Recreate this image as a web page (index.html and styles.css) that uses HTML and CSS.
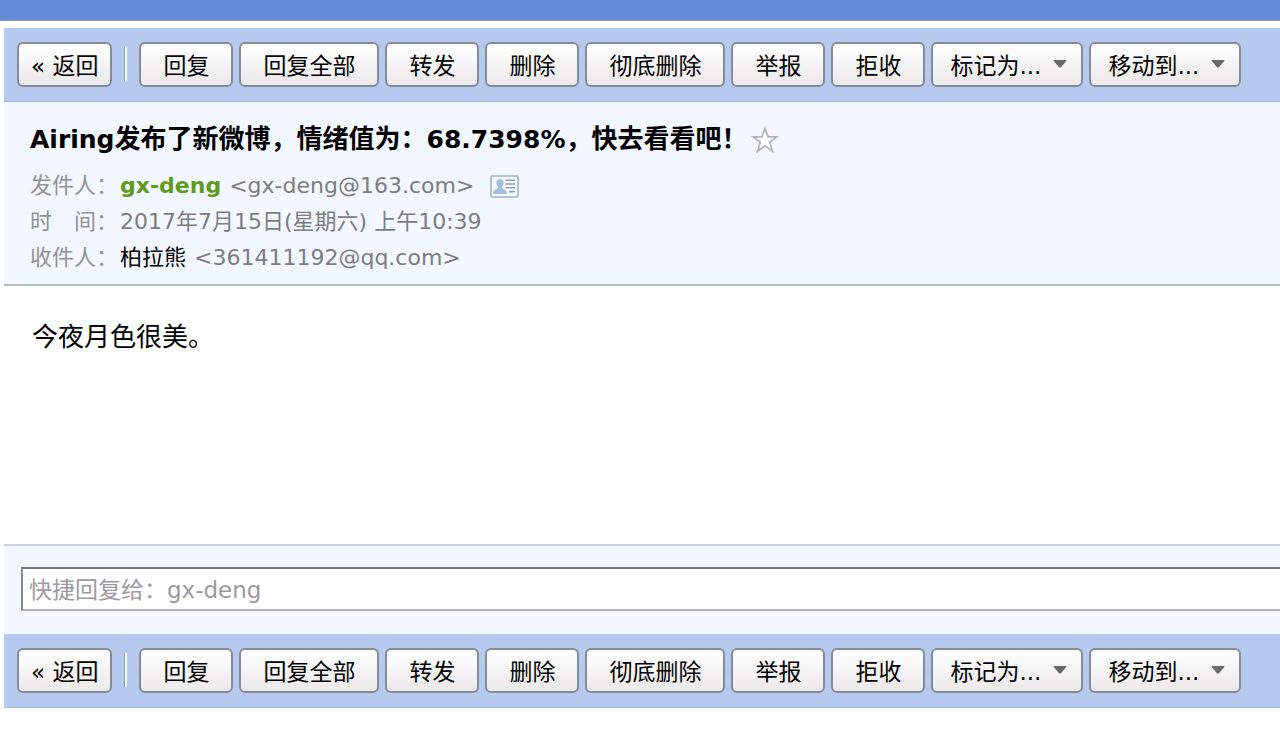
FILE: index.html
```html
<!DOCTYPE html>
<html lang="zh-CN">
<head>
  <meta charset="UTF-8">
  <meta name="viewport" content="width=device-width, initial-scale=1.0">
  <title>读信</title>
  <link rel="stylesheet" href="styles.css">
</head>
<body>
  <header class="topbar"></header>

  <main class="mail">
    <div class="toolbar">
      <button type="button" class="btn btn-back">« 返回</button>
      <span class="separator"></span>
      <div class="btn-group">
        <button type="button" class="btn">回复</button>
        <button type="button" class="btn">回复全部</button>
        <button type="button" class="btn">转发</button>
        <button type="button" class="btn">删除</button>
        <button type="button" class="btn">彻底删除</button>
        <button type="button" class="btn">举报</button>
        <button type="button" class="btn">拒收</button>
        <div class="dropdown">
          <select class="btn" aria-label="标记为">
            <option>标记为...</option>
          </select>
          <svg class="arrow" viewBox="0 0 14 8"><path d="M1.5 0h11q1.6 0 .6 1.2L8.2 7q-1.2 1.4-2.4 0L.9 1.2Q-.1 0 1.5 0z"/></svg>
        </div>
        <div class="dropdown">
          <select class="btn" aria-label="移动到">
            <option>移动到...</option>
          </select>
          <svg class="arrow" viewBox="0 0 14 8"><path d="M1.5 0h11q1.6 0 .6 1.2L8.2 7q-1.2 1.4-2.4 0L.9 1.2Q-.1 0 1.5 0z"/></svg>
        </div>
      </div>
    </div>

    <section class="mail-head">
      <div class="subject-row">
        <h1 class="subject"><span class="latin">Airing</span>发布了新微博，情绪值为：<span class="latin">68.7398%</span>，快去看看吧！</h1>
        <button type="button" class="icon-btn" aria-label="星标">
          <svg class="star" viewBox="0 0 26 26"><path d="M13 2l2.8 8H24l-6.6 5 2.5 8.5L13 18.4l-6.9 5.1L8.6 15 2 10h8.2z"/></svg>
        </button>
      </div>
      <dl class="meta">
        <dt>发件人：</dt>
        <dd>
          <b class="sender">gx-deng</b>
          <span>&lt;gx-deng@163.com&gt;</span>
          <button type="button" class="icon-btn card-btn" aria-label="联系人">
            <svg class="card" viewBox="0 0 29 23">
              <rect x="1" y="1" width="27" height="21" rx="1" fill="#f5f9fe" stroke="#9fb3c9" stroke-width="1.6"/>
              <path d="M10 4c2.300 0 3.800 1.500 3.600 4-.1 1.700-.7 2.900-1.500 3.600v1.700c1.400.9 4.900 1.400 4.900 5.700H3c0-4.300 3.500-4.800 4.900-5.700v-1.700C7.100 10.900 6.500 9.700 6.400 8 6.200 5.500 7.700 4 10 4z" fill="#a5bedb"/>
              <path d="M15.500 5.200H25M15.500 9H25M15.500 12.800H25M19 16.600h6" stroke="#8ea3ba" stroke-width="1.600"/>
            </svg>
          </button>
        </dd>
        <dt>时　间：</dt>
        <dd>2017年7月15日(星期六) 上午10:39</dd>
        <dt>收件人：</dt>
        <dd>
          <span class="receiver">柏拉熊</span>
          <span>&lt;361411192@qq.com&gt;</span>
        </dd>
      </dl>
    </section>

    <article class="mail-body">今夜月色很美。</article>

    <form class="quick-reply">
      <input type="text" class="reply-input" aria-label="快捷回复" placeholder="快捷回复给：gx-deng">
    </form>

    <div class="toolbar">
      <button type="button" class="btn btn-back">« 返回</button>
      <span class="separator"></span>
      <div class="btn-group">
        <button type="button" class="btn">回复</button>
        <button type="button" class="btn">回复全部</button>
        <button type="button" class="btn">转发</button>
        <button type="button" class="btn">删除</button>
        <button type="button" class="btn">彻底删除</button>
        <button type="button" class="btn">举报</button>
        <button type="button" class="btn">拒收</button>
        <div class="dropdown">
          <select class="btn" aria-label="标记为">
            <option>标记为...</option>
          </select>
          <svg class="arrow" viewBox="0 0 14 8"><path d="M1.5 0h11q1.6 0 .6 1.2L8.2 7q-1.2 1.4-2.4 0L.9 1.2Q-.1 0 1.5 0z"/></svg>
        </div>
        <div class="dropdown">
          <select class="btn" aria-label="移动到">
            <option>移动到...</option>
          </select>
          <svg class="arrow" viewBox="0 0 14 8"><path d="M1.5 0h11q1.6 0 .6 1.2L8.2 7q-1.2 1.4-2.4 0L.9 1.2Q-.1 0 1.5 0z"/></svg>
        </div>
      </div>
    </div>
  </main>
</body>
</html>
```
FILE: styles.css
```css
* {
  box-sizing: border-box;
}
body {
  margin: 0;
  background-color: #fff;
  color: #000;
  font-family: "DejaVu Sans", "Noto Sans CJK SC", sans-serif;
  font-size: 22px;
}
.topbar {
  height: 21px;
  background-color: #6389d7;
  border-bottom: 1px solid #7f99cf;
}
.mail {
  margin: 7px 0 0 4px;
}

/* toolbar */
.toolbar {
  display: flex;
  align-items: center;
  gap: 12px;
  height: 74px;
  padding: 0 13px 1px;
  background-color: #b6c9ef;
  border-bottom: 1px solid #a3b7dc;
}
.btn-group {
  display: flex;
  gap: 6px;
}
.btn {
  height: 45px;
  padding: 3px 22px 0;
  border: 2px solid #868b98;
  border-radius: 6px;
  background: linear-gradient(#fff, #ebe9ea);
  color: #000;
  font-family: inherit;
  font-size: 23px;
  line-height: 30px;
  white-space: nowrap;
  cursor: pointer;
}
.btn-back {
  padding: 3px 12px 0;
}
.separator {
  width: 3px;
  height: 34px;
  border-left: 1px solid #8f96a5;
  background-color: #fff;
}
.dropdown {
  position: relative;
}
.dropdown .btn {
  appearance: none;
  width: 152px;
  padding: 3px 0 0 17px;
}
.arrow {
  position: absolute;
  top: 18px;
  right: 16px;
  width: 14px;
  height: 8px;
  fill: #6a6a6c;
  pointer-events: none;
}

/* mail header */
.mail-head {
  padding: 17px 26px 8px;
  background-color: #f3f7ff;
  border-bottom: 2px solid #b1c0d5;
}
.subject-row {
  display: flex;
  align-items: center;
  gap: 4px;
}
.subject {
  margin: 0;
  font-size: 26px;
  line-height: 40px;
}
.latin {
  font-size: 25px;
}
.icon-btn {
  display: flex;
  padding: 0;
  border: none;
  background: none;
  cursor: pointer;
}
.star {
  width: 28px;
  height: 28px;
  fill: #fff;
  stroke: #b1b3b7;
  stroke-width: 1.6;
}
.meta {
  display: grid;
  grid-template-columns: 90px 1fr;
  grid-auto-rows: 36px;
  margin: 8px 0 0;
  line-height: 36px;
  color: #7d7d7f;
}
.meta dt {
  color: #929295;
}
.meta dd {
  display: flex;
  align-items: center;
  gap: 8px;
  margin: 0;
}
.sender {
  color: #5e9c1e;
}
.receiver {
  color: #000;
}
.card-btn {
  margin-left: 8px;
}
.card {
  width: 29px;
  height: 23px;
}

/* mail content */
.mail-body {
  min-height: 258px;
  padding: 31px 28px;
  font-size: 26px;
  line-height: 40px;
}

/* quick reply */
.quick-reply {
  padding: 21px 0 23px 17px;
  background-color: #f3f7ff;
  border-top: 2px solid #cbd4e3;
}
.reply-input {
  display: block;
  width: 100%;
  height: 44px;
  padding: 2px 6px 0;
  border: 2px solid #b4b5b9;
  border-top-color: #77777b;
  border-left-color: #8b8b90;
  border-right: none;
  background-color: #fff;
  font-family: inherit;
  font-size: 23px;
}
.reply-input::placeholder {
  color: #9d9b9e;
}
```
